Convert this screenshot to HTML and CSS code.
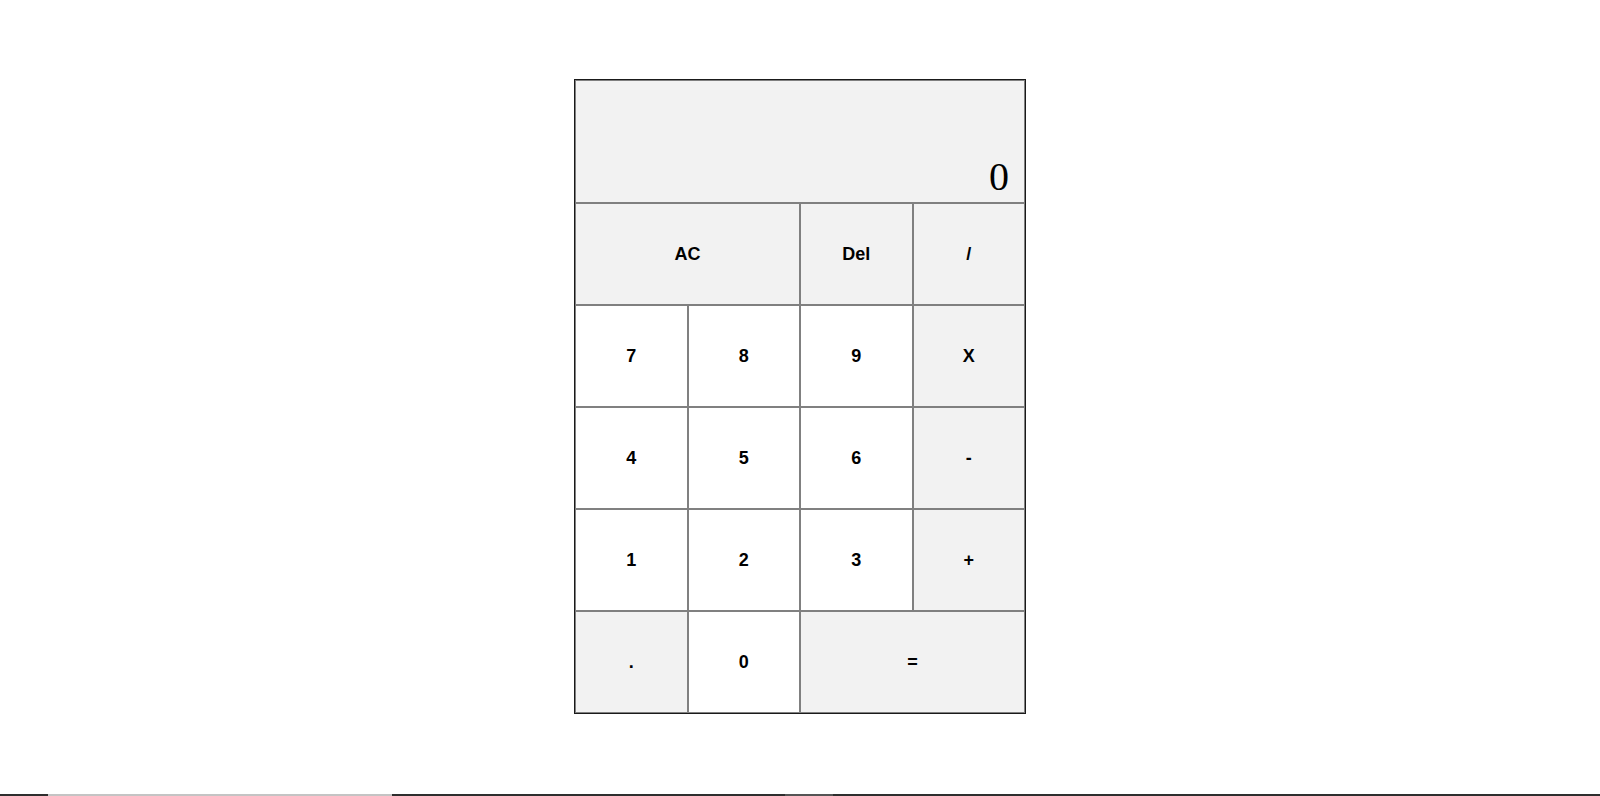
FILE: index.html
```html
<!DOCTYPE html>
<html lang="en">
<head>
<meta charset="utf-8">
<title>Calculator</title>
<link rel="stylesheet" href="styles.css">
</head>
<body>
<main class="page">
  <div class="calculator">
    <div class="display"><span class="current">0</span></div>
    <button class="key op span-two">AC</button>
    <button class="key op">Del</button>
    <button class="key op">/</button>
    <button class="key">7</button>
    <button class="key">8</button>
    <button class="key">9</button>
    <button class="key op">X</button>
    <button class="key">4</button>
    <button class="key">5</button>
    <button class="key">6</button>
    <button class="key op">-</button>
    <button class="key">1</button>
    <button class="key">2</button>
    <button class="key">3</button>
    <button class="key op">+</button>
    <button class="key op">.</button>
    <button class="key">0</button>
    <button class="key op span-two">=</button>
  </div>
</main>
<div class="bottom-strip">
  <span class="seg seg-dark seg-a"></span>
  <span class="seg seg-light seg-b"></span>
  <span class="seg seg-dark seg-c"></span>
  <span class="seg seg-mid seg-d"></span>
  <span class="seg seg-dark seg-e"></span>
</div>
</body>
</html>
```

FILE: styles.css
```css
html, body {
  margin: 0;
  padding: 0;
  background: #ffffff;
}

body {
  min-height: 100vh;
  display: flex;
  flex-direction: column;
}

.page {
  flex: 1;
  display: flex;
  justify-content: center;
  align-items: flex-start;
  padding-top: 79px;
}

.calculator {
  display: grid;
  grid-template-columns: repeat(4, 112.5px);
  grid-template-rows: 123px repeat(5, 102px);
  border: 1px solid #1a1a1a;
}

.display {
  grid-column: 1 / -1;
  background: #f2f2f2;
  border: 1px solid #808080;
  display: flex;
  justify-content: flex-end;
  align-items: flex-end;
  padding: 0 15px 2px 0;
}

.current {
  font-family: "Liberation Serif", "Times New Roman", serif;
  font-size: 40px;
  color: #000000;
}

.key {
  font-family: "Liberation Sans", Arial, sans-serif;
  font-weight: bold;
  font-size: 18px;
  color: #000000;
  background: #ffffff;
  border: 1px solid #808080;
  margin: 0;
  padding: 0;
}

.key.op {
  background: #f2f2f2;
}

.span-two {
  grid-column: span 2;
}

.bottom-strip {
  display: flex;
  height: 2px;
}

.seg {
  display: block;
  height: 2px;
}

.seg-dark { background: #2e2e2e; }
.seg-light { background: #c4c4c4; }
.seg-mid { background: #555555; }

.seg-a { width: 48px; }
.seg-b { width: 344px; }
.seg-c { width: 393px; }
.seg-d { width: 48px; }
.seg-e { flex: 1; }
```
